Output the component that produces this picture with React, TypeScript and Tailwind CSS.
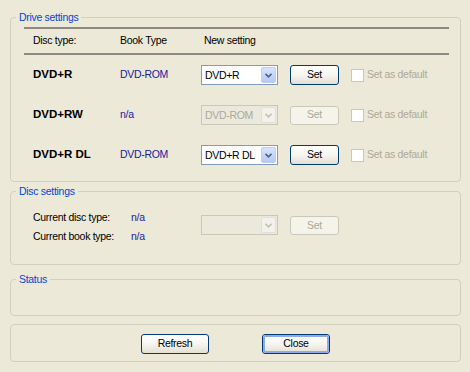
import React from 'react';

const font = { fontFamily: '"Liberation Sans", Arial, sans-serif' };

function Chevron({ disabled }: { disabled?: boolean }) {
  return (
    <svg width="7" height="5" viewBox="0 0 7 5">
      <path d="M0.5 0.8 L3.5 3.8 L6.5 0.8" fill="none" stroke={disabled ? '#c3c1b4' : '#4d6185'} strokeWidth="1.6" />
    </svg>
  );
}

function Combo({ value, disabled }: { value?: string; disabled?: boolean }) {
  return (
    <div
      className={`flex h-[20px] w-[77px] items-stretch border p-[1px] ${
        disabled ? 'border-[#c9c7ba] bg-[#ebe9dc]' : 'border-[#7f9db9] bg-white'
      }`}
    >
      <div className={`flex-1 pl-[2px] leading-[16px] ${disabled ? 'text-[#aca899]' : 'text-black'}`}>{value}</div>
      <div
        className={`flex w-[15px] items-center justify-center rounded-[2px] border ${
          disabled
            ? 'border-[#e3e1d7] bg-[#f2f1eb]'
            : 'border-[#bccdf7] bg-gradient-to-b from-[#d8e4fd] to-[#b6c9f6]'
        }`}
      >
        <Chevron disabled={disabled} />
      </div>
    </div>
  );
}

function XpButton({ label, disabled, focused, w = 'w-[49px]' }: { label: string; disabled?: boolean; focused?: boolean; w?: string }) {
  if (disabled) {
    return (
      <div className={`flex h-[19px] ${w} items-center justify-center rounded-[3px] border border-[#cac8bb] bg-[#f5f4ea] text-[#aca899]`}>
        {label}
      </div>
    );
  }
  return (
    <div className={`h-[20px] ${w} rounded-[3px] border border-[#003c74] bg-gradient-to-b from-white via-[#f6f5f0] to-[#e3e0d2]`}>
      <div
        className={`flex h-full w-full items-center justify-center rounded-[2px] text-black ${
          focused ? 'border-2 border-[#8eaaea]' : ''
        }`}
      >
        {label}
      </div>
    </div>
  );
}

function DefaultBox() {
  return (
    <div className="flex items-center gap-[3px] text-[#aca899]">
      <div className="h-[13px] w-[13px] border border-[#cac8bb] bg-white" />
      <span>Set as default</span>
    </div>
  );
}

function Group({ title, className, children }: { title: string; className?: string; children?: React.ReactNode }) {
  return (
    <fieldset className={`rounded-[4px] border border-[#d0d0bf] ${className ?? ''}`}>
      <legend className="ml-[5px] px-[3px] leading-[14px] text-[#0046d5]">{title}</legend>
      {children}
    </fieldset>
  );
}

const drives = [
  { name: 'DVD+R', book: 'DVD-ROM', value: 'DVD+R', disabled: false },
  { name: 'DVD+RW', book: 'n/a', value: 'DVD-ROM', disabled: true },
  { name: 'DVD+R DL', book: 'DVD-ROM', value: 'DVD+R DL', disabled: false },
];

export default function App() {
  return (
    <div
      className="flex h-[372px] w-[470px] flex-col bg-[#ece9d8] pl-[10px] pr-[9px] pt-[10px] text-[10.5px] tracking-[-0.3px]"
      style={font}
    >
      {/* Drive settings */}
      <Group title="Drive settings">
        <div className="pb-[6px] pl-[13px] pr-[11px]">
          <div className="mt-[3px] border-y-2 border-[#8b8a80]">
            <div className="grid h-[24px] grid-cols-[87px_81px_89px_61px_1fr] items-center pl-[9px] text-black">
              <span>Disc type:</span>
              <span>Book Type</span>
              <span className="pl-[3px]">New setting</span>
            </div>
          </div>
          {drives.map((d) => (
            <div key={d.name} className="grid h-[40px] grid-cols-[87px_81px_89px_61px_1fr] items-center pl-[9px]">
              <span className="text-[11.5px] font-bold tracking-[0px] text-black">{d.name}</span>
              <span className="text-[#21219c]">{d.book}</span>
              <Combo value={d.value} disabled={d.disabled} />
              <XpButton label="Set" disabled={d.disabled} />
              <DefaultBox />
            </div>
          ))}
        </div>
      </Group>

      {/* Disc settings */}
      <Group title="Disc settings" className="mt-[2px]">
        <div className="flex items-start pb-[18px] pl-[22px]">
          <div className="grid w-[168px] grid-cols-[98px_1fr] pt-[10px] leading-[19px]">
            <span className="text-black">Current disc type:</span>
            <span className="text-[#21219c]">n/a</span>
            <span className="text-black">Current book type:</span>
            <span className="text-[#21219c]">n/a</span>
          </div>
          <div className="mt-[17px] w-[89px]">
            <Combo disabled />
          </div>
          <div className="mt-[18px]">
            <XpButton label="Set" disabled />
          </div>
        </div>
      </Group>

      {/* Status */}
      <Group title="Status" className="mt-[7px] h-[44px]" />

      {/* Buttons */}
      <div className="mt-[8px] flex h-[38px] justify-center gap-[53px] rounded-[4px] border border-[#d0d0bf] pt-[9px]">
        <XpButton label="Refresh" w="w-[68px]" />
        <XpButton label="Close" w="w-[68px]" focused />
      </div>
    </div>
  );
}
